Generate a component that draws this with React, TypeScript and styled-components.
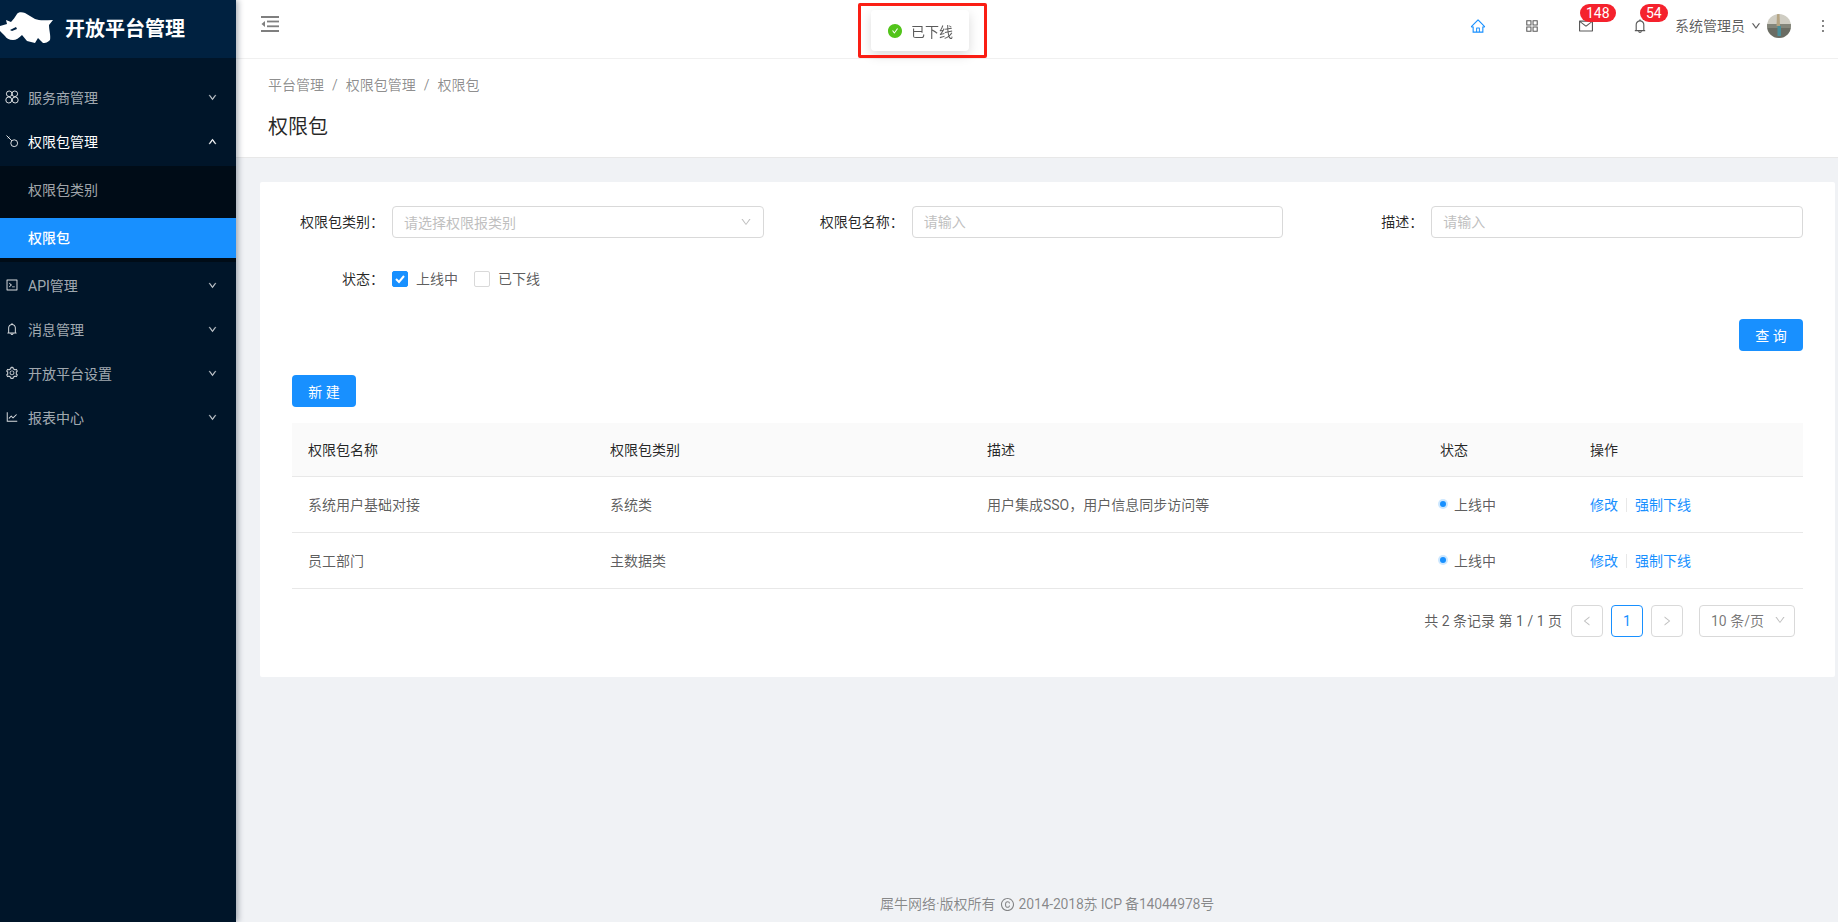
import React from "react";
import styled, { createGlobalStyle } from "styled-components";
import {
  AiOutlineHome,
  AiOutlineAppstore,
  AiOutlineMail,
  AiOutlineBell,
  AiOutlineSetting,
  AiOutlineLineChart,
  AiOutlineDown,
  AiOutlineUp,
  AiOutlineLeft,
  AiOutlineRight,
  AiOutlineCode,
  AiFillCheckCircle,
  AiOutlineMore,
  AiOutlineCopyright,
} from "react-icons/ai";

const GlobalStyle = createGlobalStyle`
  html, body { margin: 0; padding: 0; height: 100%; overflow: hidden; }
  body {
    font-family: Roboto, "Noto Sans CJK SC", sans-serif;
    font-size: 14px;
    color: rgba(0, 0, 0, 0.65);
  }
  #root { height: 100%; }
  * { box-sizing: border-box; }
`;

const Layout = styled.div`
  display: flex;
  height: 922px;
  background: #f0f2f5;
`;

const Sidebar = styled.aside`
  width: 236px;
  flex: none;
  background: #001529;
  box-shadow: 2px 0 6px rgba(0, 21, 41, 0.35);
  z-index: 2;
  display: flex;
  flex-direction: column;
`;

const Brand = styled.div`
  height: 58px;
  background: #002140;
  display: flex;
  align-items: center;
  gap: 12px;
  overflow: hidden;
`;

const RhinoMark = styled.svg`
  flex: none;
  filter: blur(0.35px);
`;

const BrandTitle = styled.h1`
  margin: 0;
  font-size: 20px;
  font-weight: 600;
  color: #fff;
  line-height: 28px;
`;

const Menu = styled.nav`
  display: flex;
  flex-direction: column;
  gap: 4px;
  padding-top: 20px;
`;

const MenuItem = styled.div<{ $open?: boolean }>`
  height: 40px;
  display: flex;
  align-items: center;
  padding: 0 19px 2px 5px;
  color: ${(p) => (p.$open ? "#fff" : "rgba(255,255,255,0.65)")};
`;

const MenuIcon = styled.span`
  width: 14px;
  height: 16px;
  margin-right: 9px;
  display: flex;
  align-items: center;
  justify-content: center;
  font-size: 16px;
  color: rgba(255, 255, 255, 0.85);
`;

const MenuLabel = styled.span`
  flex: 1;
`;

const MenuArrow = styled.span`
  font-size: 9px;
  display: flex;
  svg {
    stroke: currentColor;
    stroke-width: 70;
  }
`;

const SubMenu = styled.div`
  background: #000c17;
  padding: 4px 0;
  display: flex;
  flex-direction: column;
  gap: 8px;
`;

const SubItem = styled.div<{ $selected?: boolean }>`
  height: 40px;
  display: flex;
  align-items: center;
  padding: 0 0 2px 28px;
  background: ${(p) => (p.$selected ? "#1890ff" : "transparent")};
  color: ${(p) => (p.$selected ? "#fff" : "rgba(255,255,255,0.65)")};
  font-weight: ${(p) => (p.$selected ? 500 : 400)};
`;

const Main = styled.div`
  flex: 1;
  min-width: 0;
  display: flex;
  flex-direction: column;
`;

const TopBar = styled.header`
  height: 59px;
  flex: none;
  background: #fff;
  border-bottom: 1px solid #f0f0f0;
  display: flex;
  justify-content: space-between;
  align-items: flex-start;
`;

const Trigger = styled.div`
  height: 48px;
  padding-left: 25px;
  display: flex;
  align-items: center;
  color: #7f7f7f;
`;

const TopActions = styled.div`
  height: 52px;
  display: flex;
  align-items: center;
`;

const Action = styled.div<{ $active?: boolean }>`
  position: relative;
  width: 54px;
  height: 52px;
  display: flex;
  align-items: center;
  justify-content: center;
  font-size: 16px;
  color: ${(p) => (p.$active ? "#1890ff" : "rgba(0,0,0,0.65)")};
`;

const Badge = styled.span<{ $left: number }>`
  position: absolute;
  top: 4px;
  left: ${(p) => p.$left}px;
  height: 18px;
  padding: 1px 6px 0;
  border-radius: 9px;
  background: #f5222d;
  color: #fff;
  font-size: 14px;
  line-height: 17px;
  white-space: nowrap;
`;

const UserBlock = styled.div`
  display: flex;
  align-items: center;
  padding-left: 8px;
  color: rgba(0, 0, 0, 0.65);
`;

const UserName = styled.span`
  padding-bottom: 2px;
`;

const UserArrow = styled.span`
  display: flex;
  font-size: 10px;
  margin: 0 6px;
  svg {
    stroke: currentColor;
    stroke-width: 40;
  }
`;

const AvatarImage = styled.svg`
  display: block;
`;

const MoreButton = styled.div`
  width: 47px;
  padding-left: 17px;
  display: flex;
  justify-content: center;
  font-size: 18px;
  color: rgba(0, 0, 0, 0.65);
`;

const PageHead = styled.section`
  flex: none;
  background: #fff;
  padding: 15px 32px 16px;
  border-bottom: 1px solid #e8e8e8;
`;

const Crumbs = styled.div`
  display: flex;
  line-height: 22px;
  color: rgba(0, 0, 0, 0.45);
`;

const CrumbSep = styled.span`
  margin: 0 8px;
`;

const PageTitle = styled.h2`
  margin: 17px 0 0;
  font-size: 20px;
  font-weight: 400;
  line-height: 28px;
  color: rgba(0, 0, 0, 0.85);
`;

const Card = styled.section`
  margin: 24px 3px 0 24px;
  background: #fff;
  border-radius: 2px;
  padding: 24px 32px 40px;
`;

const FormGrid = styled.div`
  display: grid;
  grid-template-columns: repeat(3, 1fr);
  column-gap: 48px;
  row-gap: 25px;
`;

const FormItem = styled.div`
  display: flex;
  align-items: center;
  height: 32px;
`;

const FormLabel = styled.label`
  width: 100px;
  flex: none;
  padding: 0 8px 2px 0;
  text-align: right;
  color: rgba(0, 0, 0, 0.85);
`;

const TextInput = styled.input`
  flex: 1;
  min-width: 0;
  height: 32px;
  border: 1px solid #d9d9d9;
  border-radius: 4px;
  padding: 0 11px;
  font: inherit;
  outline: none;
  &::placeholder { color: #bfbfbf; opacity: 1; }
`;

const SelectBox = styled.div`
  flex: 1;
  height: 32px;
  border: 1px solid #d9d9d9;
  border-radius: 4px;
  padding: 0 11px;
  display: flex;
  align-items: center;
  justify-content: space-between;
  color: #bfbfbf;
`;

const SelectArrow = styled.span`
  display: flex;
  font-size: 12px;
  color: #bfbfbf;
`;

const CheckGroup = styled.div`
  display: flex;
  align-items: center;
  gap: 16px;
`;

const CheckOption = styled.label`
  display: flex;
  align-items: center;
  gap: 8px;
`;

const CheckText = styled.span`
  padding-bottom: 2px;
`;

const CheckBox = styled.span<{ $checked?: boolean }>`
  width: 16px;
  height: 16px;
  border-radius: 2px;
  border: 1px solid ${(p) => (p.$checked ? "#1890ff" : "#d9d9d9")};
  background: ${(p) => (p.$checked ? "#1890ff" : "#fff")};
  display: flex;
  align-items: center;
  justify-content: center;
`;

const QueryRow = styled.div`
  display: flex;
  justify-content: flex-end;
  margin-top: 24px;
`;

const PrimaryButton = styled.button`
  width: 64px;
  height: 32px;
  border: 0;
  border-radius: 4px;
  background: #1890ff;
  color: #fff;
  font: inherit;
  white-space: pre;
  padding: 0;
`;

const CreateRow = styled.div`
  margin: 24px 0 16px;
  display: flex;
`;

const Table = styled.table`
  width: 100%;
  table-layout: fixed;
  border-collapse: separate;
  border-spacing: 0;
`;

const HeadCell = styled.th`
  height: 54px;
  padding: 0 16px 1px;
  background: #fafafa;
  border-bottom: 1px solid #e8e8e8;
  text-align: left;
  font-weight: 400;
  color: rgba(0, 0, 0, 0.85);
`;

const BodyCell = styled.td`
  height: 56px;
  padding: 0 16px 2px;
  border-bottom: 1px solid #e8e8e8;
`;

const Status = styled.span`
  display: inline-flex;
  align-items: center;
  gap: 8px;
`;

const StatusDot = styled.span`
  width: 6px;
  height: 6px;
  border-radius: 50%;
  background: #1890ff;
  box-shadow: 0 0 0 2px rgba(24, 144, 255, 0.22);
`;

const ActionLink = styled.a`
  color: #1890ff;
`;

const LinkDivider = styled.span`
  display: inline-block;
  width: 1px;
  height: 14px;
  margin: 0 8px;
  background: #e8e8e8;
  vertical-align: -2px;
`;

const Pager = styled.div`
  display: flex;
  justify-content: flex-end;
  align-items: center;
  margin-top: 16px;
  padding-right: 8px;
  height: 32px;
`;

const PagerTotal = styled.span`
  margin-right: 9px;
  padding-bottom: 3px;
`;

const PagerButton = styled.div<{ $active?: boolean; $disabled?: boolean }>`
  width: 32px;
  height: 32px;
  margin-right: 8px;
  border: 1px solid ${(p) => (p.$active ? "#1890ff" : "#d9d9d9")};
  border-radius: 4px;
  display: flex;
  align-items: center;
  justify-content: center;
  font-size: ${(p) => (p.$disabled ? "12px" : "14px")};
  color: ${(p) =>
    p.$active ? "#1890ff" : p.$disabled ? "rgba(0,0,0,0.25)" : "rgba(0,0,0,0.65)"};
`;

const PageSize = styled.div`
  width: 96px;
  height: 32px;
  margin-left: 8px;
  border: 1px solid #d9d9d9;
  border-radius: 4px;
  padding: 0 8px 2px 11px;
  display: flex;
  align-items: center;
  justify-content: space-between;
  color: rgba(0, 0, 0, 0.55);
`;

const Footer = styled.footer`
  margin-top: auto;
  height: 28px;
  padding-left: 20px;
  display: flex;
  align-items: flex-start;
  justify-content: center;
  line-height: 20px;
  color: rgba(0, 0, 0, 0.45);
`;

const CopyrightMark = styled.span`
  display: flex;
  align-items: center;
  height: 20px;
  font-size: 15px;
  margin: 0 4px;
`;

const FooterNumbers = styled.span`
  letter-spacing: -0.2px;
`;

const MessageLayer = styled.div`
  position: fixed;
  top: 10px;
  left: 2px;
  right: 0;
  display: flex;
  justify-content: center;
  z-index: 5;
`;

const Message = styled.div`
  height: 41px;
  padding: 0 16px;
  background: #fff;
  border-radius: 4px;
  box-shadow: 0 4px 12px rgba(0, 0, 0, 0.15);
  display: flex;
  align-items: center;
  gap: 8px;
`;

const MessageIcon = styled.span`
  display: flex;
  font-size: 16px;
  color: #52c41a;
`;

const Annotation = styled.div`
  position: fixed;
  left: 858px;
  top: 3px;
  width: 129px;
  height: 55px;
  border: 3px solid #fa1e14;
  border-radius: 2px;
  z-index: 6;
`;

const Rhino = () => (
  <RhinoMark width="53" height="34" viewBox="0 0 53 34">
    <path
      fill="#fff"
      d="M0 14 L7 12 L6 8 L11 10 C13 8 15 5 17 2 C18 0 22 0 25 1 L35 7 C40 9 46 8 53 8 L49 13 C49 18 51 24 50 28 C47 31 45 31 43 31 L38 26 L35 31 L27 29 L22 23 C19 26 16 28 13 28 C9 28 6 26 5 24 L0 19 Z"
    />
    <path fill="#002140" d="M10 18 L16 15 L17 17 L12 19 Z" />
  </RhinoMark>
);

const TriggerIcon = () => (
  <svg width="18" height="16" viewBox="0 0 18 16" fill="currentColor">
    <rect x="0" y="0" width="18" height="2" />
    <rect x="6" y="4.6" width="12" height="1.8" />
    <rect x="6" y="9.4" width="12" height="1.8" />
    <rect x="0" y="14" width="18" height="2" />
    <path d="M4 5 L4 11 L0.5 8 Z" />
  </svg>
);

const ClusterIcon = () => (
  <svg width="14" height="14" viewBox="0 0 14 14" fill="none" stroke="currentColor" strokeWidth="1">
    <circle cx="4.2" cy="3.8" r="2.8" />
    <circle cx="9.8" cy="3.8" r="2.8" />
    <circle cx="3.8" cy="10" r="3" />
    <circle cx="10.2" cy="10" r="3" />
  </svg>
);

const KeyIcon = () => (
  <svg width="14" height="14" viewBox="0 0 14 14" fill="none" stroke="currentColor" strokeWidth="1">
    <circle cx="9.2" cy="9.2" r="3.4" />
    <path d="M1.5 1.5 L6.8 6.8 M2.8 4.2 L4.4 2.8" />
  </svg>
);

const CheckMark = () => (
  <svg width="12" height="12" viewBox="0 0 12 12" fill="none" stroke="#fff" strokeWidth="2">
    <path d="M2 6 L5 9 L10 3" />
  </svg>
);

const Avatar = () => (
  <AvatarImage width="24" height="24" viewBox="0 0 24 24">
    <defs>
      <clipPath id="avatar-clip">
        <circle cx="12" cy="12" r="12" />
      </clipPath>
    </defs>
    <g clipPath="url(#avatar-clip)">
      <rect width="24" height="24" fill="#cfcdc3" />
      <rect y="10" width="24" height="4" fill="#83857a" />
      <path d="M10 0 L12.5 0 L13 12 L9.5 12 Z" fill="#b5a483" />
      <rect y="14" width="24" height="10" fill="#6a6c63" />
      <rect x="10.5" y="12" width="3.5" height="10" fill="#4a8f9a" />
    </g>
  </AvatarImage>
);

const menuTop = [{ icon: <ClusterIcon />, label: "服务商管理" }];
const menuBottom = [
  { icon: <AiOutlineCode />, label: "API管理" },
  { icon: <AiOutlineBell />, label: "消息管理" },
  { icon: <AiOutlineSetting />, label: "开放平台设置" },
  { icon: <AiOutlineLineChart />, label: "报表中心" },
];

const columns = [
  { title: "权限包名称", width: 302 },
  { title: "权限包类别", width: 377 },
  { title: "描述", width: 453 },
  { title: "状态", width: 150 },
  { title: "操作", width: 229 },
];

const rows = [
  { name: "系统用户基础对接", type: "系统类", desc: "用户集成SSO，用户信息同步访问等" },
  { name: "员工部门", type: "主数据类", desc: "" },
];

export default function App() {
  return (
    <>
      <GlobalStyle />
      <Layout>
        <Sidebar>
          <Brand>
            <Rhino />
            <BrandTitle>开放平台管理</BrandTitle>
          </Brand>
          <Menu>
            {menuTop.map((m) => (
              <MenuItem key={m.label}>
                <MenuIcon>{m.icon}</MenuIcon>
                <MenuLabel>{m.label}</MenuLabel>
                <MenuArrow><AiOutlineDown /></MenuArrow>
              </MenuItem>
            ))}
            <MenuItem $open>
              <MenuIcon><KeyIcon /></MenuIcon>
              <MenuLabel>权限包管理</MenuLabel>
              <MenuArrow><AiOutlineUp /></MenuArrow>
            </MenuItem>
            <SubMenu>
              <SubItem>权限包类别</SubItem>
              <SubItem $selected>权限包</SubItem>
            </SubMenu>
            {menuBottom.map((m) => (
              <MenuItem key={m.label}>
                <MenuIcon>{m.icon}</MenuIcon>
                <MenuLabel>{m.label}</MenuLabel>
                <MenuArrow><AiOutlineDown /></MenuArrow>
              </MenuItem>
            ))}
          </Menu>
        </Sidebar>
        <Main>
          <TopBar>
            <Trigger><TriggerIcon /></Trigger>
            <TopActions>
              <Action $active><AiOutlineHome /></Action>
              <Action><AiOutlineAppstore /></Action>
              <Action>
                <AiOutlineMail />
                <Badge $left={21}>148</Badge>
              </Action>
              <Action>
                <AiOutlineBell />
                <Badge $left={27}>54</Badge>
              </Action>
              <UserBlock>
                <UserName>系统管理员</UserName>
                <UserArrow><AiOutlineDown /></UserArrow>
                <Avatar />
              </UserBlock>
              <MoreButton><AiOutlineMore /></MoreButton>
            </TopActions>
          </TopBar>
          <PageHead>
            <Crumbs>
              <span>平台管理</span>
              <CrumbSep>/</CrumbSep>
              <span>权限包管理</span>
              <CrumbSep>/</CrumbSep>
              <span>权限包</span>
            </Crumbs>
            <PageTitle>权限包</PageTitle>
          </PageHead>
          <Card>
            <FormGrid>
              <FormItem>
                <FormLabel>权限包类别：</FormLabel>
                <SelectBox>
                  <span>请选择权限报类别</span>
                  <SelectArrow><AiOutlineDown /></SelectArrow>
                </SelectBox>
              </FormItem>
              <FormItem>
                <FormLabel>权限包名称：</FormLabel>
                <TextInput placeholder="请输入" />
              </FormItem>
              <FormItem>
                <FormLabel>描述：</FormLabel>
                <TextInput placeholder="请输入" />
              </FormItem>
              <FormItem>
                <FormLabel>状态：</FormLabel>
                <CheckGroup>
                  <CheckOption>
                    <CheckBox $checked><CheckMark /></CheckBox>
                    <CheckText>上线中</CheckText>
                  </CheckOption>
                  <CheckOption>
                    <CheckBox />
                    <CheckText>已下线</CheckText>
                  </CheckOption>
                </CheckGroup>
              </FormItem>
            </FormGrid>
            <QueryRow>
              <PrimaryButton>查 询</PrimaryButton>
            </QueryRow>
            <CreateRow>
              <PrimaryButton>新 建</PrimaryButton>
            </CreateRow>
            <Table>
              <colgroup>
                {columns.map((c) => (
                  <col key={c.title} width={c.width} />
                ))}
              </colgroup>
              <thead>
                <tr>
                  {columns.map((c) => (
                    <HeadCell key={c.title}>{c.title}</HeadCell>
                  ))}
                </tr>
              </thead>
              <tbody>
                {rows.map((r) => (
                  <tr key={r.name}>
                    <BodyCell>{r.name}</BodyCell>
                    <BodyCell>{r.type}</BodyCell>
                    <BodyCell>{r.desc}</BodyCell>
                    <BodyCell>
                      <Status>
                        <StatusDot />
                        上线中
                      </Status>
                    </BodyCell>
                    <BodyCell>
                      <ActionLink>修改</ActionLink>
                      <LinkDivider />
                      <ActionLink>强制下线</ActionLink>
                    </BodyCell>
                  </tr>
                ))}
              </tbody>
            </Table>
            <Pager>
              <PagerTotal>共 2 条记录 第 1 / 1 页</PagerTotal>
              <PagerButton $disabled><AiOutlineLeft /></PagerButton>
              <PagerButton $active>1</PagerButton>
              <PagerButton $disabled><AiOutlineRight /></PagerButton>
              <PageSize>
                <span>10 条/页</span>
                <SelectArrow><AiOutlineDown /></SelectArrow>
              </PageSize>
            </Pager>
          </Card>
          <Footer>
            <span>犀牛网络·版权所有</span>
            <CopyrightMark><AiOutlineCopyright /></CopyrightMark>
            <FooterNumbers>2014-2018苏 ICP 备14044978号</FooterNumbers>
          </Footer>
        </Main>
      </Layout>
      <MessageLayer>
        <Message>
          <MessageIcon><AiFillCheckCircle /></MessageIcon>
          <span>已下线</span>
        </Message>
      </MessageLayer>
      <Annotation />
    </>
  );
}
